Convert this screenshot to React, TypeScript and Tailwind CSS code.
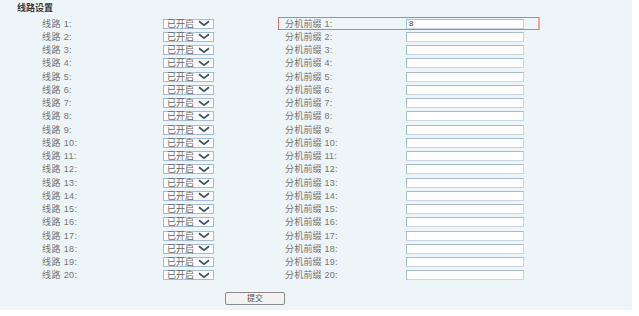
import React from "react";

const Chevron = () => (
  <svg width="12" height="7" viewBox="0 0 12 7" className="shrink-0">
    <path d="M1 1.3 L6 5.2 L11 1.3" fill="none" stroke="#3f5366" strokeWidth="1.8" />
  </svg>
);

export default function App() {
  const rows = Array.from({ length: 20 }, (_, i) => i + 1);
  return (
    <div className="w-[639px] h-[316px] bg-white" style={{ fontFamily: '"Liberation Sans", "Noto Sans CJK SC", sans-serif' }}>
      <div className="w-[632px] h-[310px] bg-[#eef5f8]">
        <div className="pl-[17px] pt-[3px] h-[17px] text-[9px] font-bold text-[#3a3a3a] leading-[11px]">线路设置</div>
        <div className="flex flex-col">
          {rows.map((n) => (
            <div key={n} className="flex items-center h-[13.26px]">
              <span className="pl-[42px] w-[163px] text-[9px] text-[#747474] leading-[10px] whitespace-pre tracking-[0.4px]">{`线路 ${n}:`}</span>
              <div className="w-[51px] h-[10px] bg-white border border-[#a9bbd0] flex items-center justify-between pl-[3px] pr-[3px]">
                <span className="text-[9px] leading-[8px] text-[#666]">已开启</span>
                <Chevron />
              </div>
              <div className="w-[64px]" />
              <div
                className={
                  "w-[262px] h-[13px] flex items-center pl-[6px] border " +
                  (n === 1 ? "self-start border-[#ee6f6f] border-r-2 border-r-[#f4a0a0]" : "border-transparent")
                }
              >
                <span className="w-[121px] text-[9px] text-[#747474] leading-[10px] whitespace-pre tracking-[0.2px]">{`分机前缀 ${n}:`}</span>
                <div className="w-[118px] h-[10px] bg-white border border-[#a9bbd0] border-r-[#c9d6e0] border-b-[#c9d6e0] flex items-center pl-[2px]">
                  <span className="text-[8px] leading-[8px] text-[#444]">{n === 1 ? "8" : ""}</span>
                </div>
              </div>
            </div>
          ))}
        </div>
        <div className="pl-[225px] pt-[10px]">
          <div className="w-[60px] h-[13px] bg-[#f2f2f2] border border-[#8a8a8a] rounded-[2px] flex items-center justify-center text-[8px] text-[#555] leading-[9px]">
            提交
          </div>
        </div>
      </div>
    </div>
  );
}
